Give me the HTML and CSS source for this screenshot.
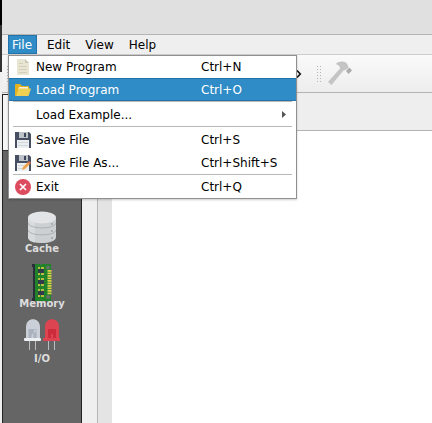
FILE: index.html
```html
<!DOCTYPE html>
<html lang="en">
<head>
<meta charset="utf-8">
<title>Simulator</title>
<link rel="stylesheet" href="styles.css">
</head>
<body>
<div class="app">
  <div class="desktop"></div>
  <div class="window">
    <div class="titlebar"></div>
    <nav class="menubar">
      <span class="menu open">File</span><span class="menu">Edit</span><span class="menu">View</span><span class="menu">Help</span>
    </nav>
    <div class="toolbar">
      <svg class="grip first" width="6" height="18" viewBox="0 0 6 18"><path d="M.5 1v17M3.5 1v17" stroke="#b4b4b4" stroke-dasharray="1 2"/></svg>
      <svg class="chevron" width="6" height="10" viewBox="0 0 6 10"><path d="M1 1.5 4.3 5 1 8.5" fill="none" stroke="#111" stroke-width="1.6"/></svg>
      <svg class="grip" width="6" height="18" viewBox="0 0 6 18"><path d="M1.5 1v17M4.5 1v17" stroke="#b4b4b4" stroke-dasharray="1 2"/></svg>
      <svg class="hammer" width="26" height="26" viewBox="0 0 26 26"><path d="M1 22 13 8.500Q13 5 8.500 4Q12 .8 17 1.800Q21 3 21.500 8L18.500 10 16.500 10.500 4.500 25Z" fill="#c4c4c4"/><path d="m19 11 3.500-3.500 2.500 3-3.500 3.500z" fill="#ababab"/></svg>
    </div>
    <div class="body">
      <aside class="sidebar">
        <div class="selected"></div>
        <div class="tab cache">
          <svg width="28" height="33" viewBox="0 0 28 33"><path d="M0 7v19c0 8 28 8 28 0V7z" fill="#cdd0d2"/><path d="M0 7v19c0 3 3 5 7 5.500V10z" fill="#d8dbdd"/><ellipse cx="14" cy="6.500" rx="14" ry="6" fill="#e2e4e5"/><path d="M0 12c1 6.500 27 6.500 28 0M0 19c1 6.500 27 6.500 28 0" fill="none" stroke="#aeb2b4"/><path d="M23 13h2M23 20h2M23 27h2" stroke="#9da3a6" stroke-width="1.500"/></svg>
          <span>Cache</span>
        </div>
        <div class="tab memory">
          <svg width="20" height="37" viewBox="0 0 20 37"><path d="M0 0h3v37H0V34h1V3H0z" fill="#29303a"/><path d="M3 0h16v37H3z" fill="#218329"/><path d="M4 0h4q1 2 2 0" fill="#5e6b5e"/><circle cx="16" cy="3.500" r="2" fill="#66706a"/><circle cx="16" cy="33" r="2" fill="#66706a"/><path d="M6 3h6v8H6zM6 14h6v8H6zM6 25h6v8H6z" fill="#b8bd42"/><path d="M8.500 3v30" stroke="#218329"/><path d="M6 5h6v4H6zM6 16h6v4H6zM6 27h6v4H6z" fill="#303a4b"/><path d="M17.500 6v25" stroke="#ddd14c" stroke-width="4" stroke-dasharray="1.700 .8"/></svg>
          <span>Memory</span>
        </div>
        <div class="tab io">
          <svg width="37" height="31" viewBox="0 0 37 31"><path d="M5.500 20v11M11.500 20v11M24.500 20v11M30.500 20v11" stroke="#b9bec2"/><path d="M2 20V8C2 -2.500 16 -2.500 16 8v12z" fill="#cbcfd7"/><path d="M4.500 19v-9h8v9h-3v-5l-2 2v3z" fill="#a9b2be"/><path d="M10 10v4l3-2z" fill="#c8cdd5"/><rect y="19" width="17" height="3" rx="1" fill="#edf0f3"/><path d="M21 20V8C21 -2.500 35 -2.500 35 8v12z" fill="#dc4452"/><path d="M24 19v-9h8v9h-3v-5l-2 2v3z" fill="#cb2b3b"/><rect x="19" y="19" width="17" height="3" rx="1" fill="#dc4452"/></svg>
          <span>I/O</span>
        </div>
      </aside>
      <div class="divider"></div>
      <main class="content">
        <div class="header"></div>
        <div class="canvas"><div class="gutter"></div></div>
      </main>
    </div>
  </div>
  <div class="dropdown">
    <div class="item first">
      <svg width="16" height="16" viewBox="0 0 16 16"><path d="M2 0h8l4 4v12H2z" fill="#e9e5d3"/><path d="M10 0v4h4z" fill="#cbc7b4"/><path d="M4 4.500h4M4 7.500h8M4 10.500h8M4 13.500h8" stroke="#d3cfbd"/></svg>
      <span class="label">New Program</span><span class="key">Ctrl+N</span>
    </div>
    <div class="item active">
      <svg width="16" height="16" viewBox="0 0 16 16"><path d="M0 3q0-1 1-1h4l2 2h6q1 0 1 1v2H4L1 14H0z" fill="#e7b21c"/><path d="M4 5h9v3H3z" fill="#f3efd9"/><path d="M3.500 6.500H16L13.500 14H1z" fill="#f0d052"/></svg>
      <span class="label">Load Program</span><span class="key">Ctrl+O</span>
    </div>
    <div class="sep"></div>
    <div class="item">
      <span class="blank"></span><span class="label">Load Example...</span>
      <svg class="arrow" width="4" height="7" viewBox="0 0 4 7"><path d="M0 0 4 3.500 0 7z" fill="#555"/></svg>
    </div>
    <div class="sep"></div>
    <div class="item">
      <svg width="16" height="16" viewBox="0 0 16 16"><path d="M0 0h14l2 2v14H0z" fill="#475062"/><path d="M4 0h9v6H4z" fill="#bdc2c8"/><path d="M9 1h2v4H9z" fill="#3d4658"/><path d="M2 8h12v8H2z" fill="#eceff1"/><path d="M3 10.500h10M3 13.500h10" stroke="#d2d6da"/></svg>
      <span class="label">Save File</span><span class="key">Ctrl+S</span>
    </div>
    <div class="item">
      <svg width="16" height="16" viewBox="0 0 16 16"><path d="M0 0h14l2 2v14H0z" fill="#475062"/><path d="M4 0h9v6H4z" fill="#bdc2c8"/><path d="M9 1h2v4H9z" fill="#3d4658"/><path d="M2 8h12v8H2z" fill="#eceff1"/><path d="M3 10.500h6M3 13.500h5" stroke="#d2d6da"/><path d="m7 15 1-3 5-5 2 2-5 5z" fill="#eda34b"/><path d="m13 7 1-1 2 2-1 1z" fill="#e4675c"/></svg>
      <span class="label">Save File As...</span><span class="key">Ctrl+Shift+S</span>
    </div>
    <div class="sep"></div>
    <div class="item last">
      <svg width="16" height="16" viewBox="0 0 16 16"><circle cx="8" cy="8" r="8" fill="#dd4b5e"/><path d="m5 5 6 6M11 5l-6 6" stroke="#fff" stroke-width="1.700"/></svg>
      <span class="label">Exit</span><span class="key">Ctrl+Q</span>
    </div>
  </div>
</div>
</body>
</html>
```
FILE: styles.css
```css
* { box-sizing: border-box; }
body {
  margin: 0;
  overflow: hidden;
  font: 12px/16px "DejaVu Sans", sans-serif;
  color: #000;
}
svg { display: block; flex: none; }
.app { position: relative; display: flex; width: 432px; height: 423px; background: #efefef; }
.desktop { width: 2px; background: linear-gradient(#000 25px, #333 25px 72px, #efefef 72px); }
.window { flex: 1; display: flex; flex-direction: column; }
.titlebar { height: 35px; background: #e0e0e0; border-bottom: 1px solid #b4b4b4; }
.menubar { display: flex; height: 20px; padding-left: 6px; border-bottom: 1px solid #cdcdcd; background: #efefef; }
.menu { height: 19px; padding: 2px 6px 0 5px; margin-right: 4px; white-space: nowrap; }
.menu.open { width: 29px; padding: 1px 0 0 3px; margin-right: 5px; border: 1px solid #2372a8; background: #308cc6; color: #fff; }
.toolbar { display: flex; align-items: center; height: 38px; border-bottom: 1px solid #b4b4b4; background: linear-gradient(#fafafa, #ededed); }
.grip.first { margin-left: 5px; }
.chevron { margin: 0 14px 0 283px; }
.hammer { margin: 0 0 2px 5px; }
.body { flex: 1; display: flex; min-height: 0; }
.sidebar { width: 80px; margin-top: 1px; border: 1px solid #222; border-bottom: 0; background: #656565; }
.selected { height: 56px; background: #f5f5f5; border-bottom: 1px solid #333; }
.tab { display: flex; flex-direction: column; align-items: center; font: bold 10px/12px "DejaVu Sans", sans-serif; color: #ddd; }
.cache { margin-top: 60px; }
.memory { margin-top: 9px; }
.memory svg { margin-bottom: -3px; }
.io { margin-top: 9px; }
.io svg { margin-bottom: 3px; }
.cache span { margin-top: -1px; }
.divider { width: 15px; }
.content { flex: 1; display: flex; flex-direction: column; border-left: 1px solid #b4b4b4; }
.header { height: 38px; border-bottom: 1px solid #b4b4b4; background: #eee; }
.canvas { flex: 1; background: #fff; }
.gutter { width: 14px; height: 100%; background: #e4e4e4; }
.dropdown { position: absolute; left: 8px; top: 55px; width: 289px; height: 144px; background: #fff; border: 1px solid #909090; box-shadow: 0 1px 2px rgb(0 0 0 / 20%); }
.item { display: flex; align-items: center; height: 23px; padding-left: 6px; }
.item.first, .item.last { height: 22px; }
.item.active { border: solid #2372a8; border-width: 1px 0; background: #308cc6; color: #fff; }
.blank { width: 16px; }
.label { width: 170px; padding-left: 5px; }
.arrow { margin-left: 81px; }
.sep { height: 2px; margin: 0 4px; border-top: 1px solid #b8b8b8; }
```
